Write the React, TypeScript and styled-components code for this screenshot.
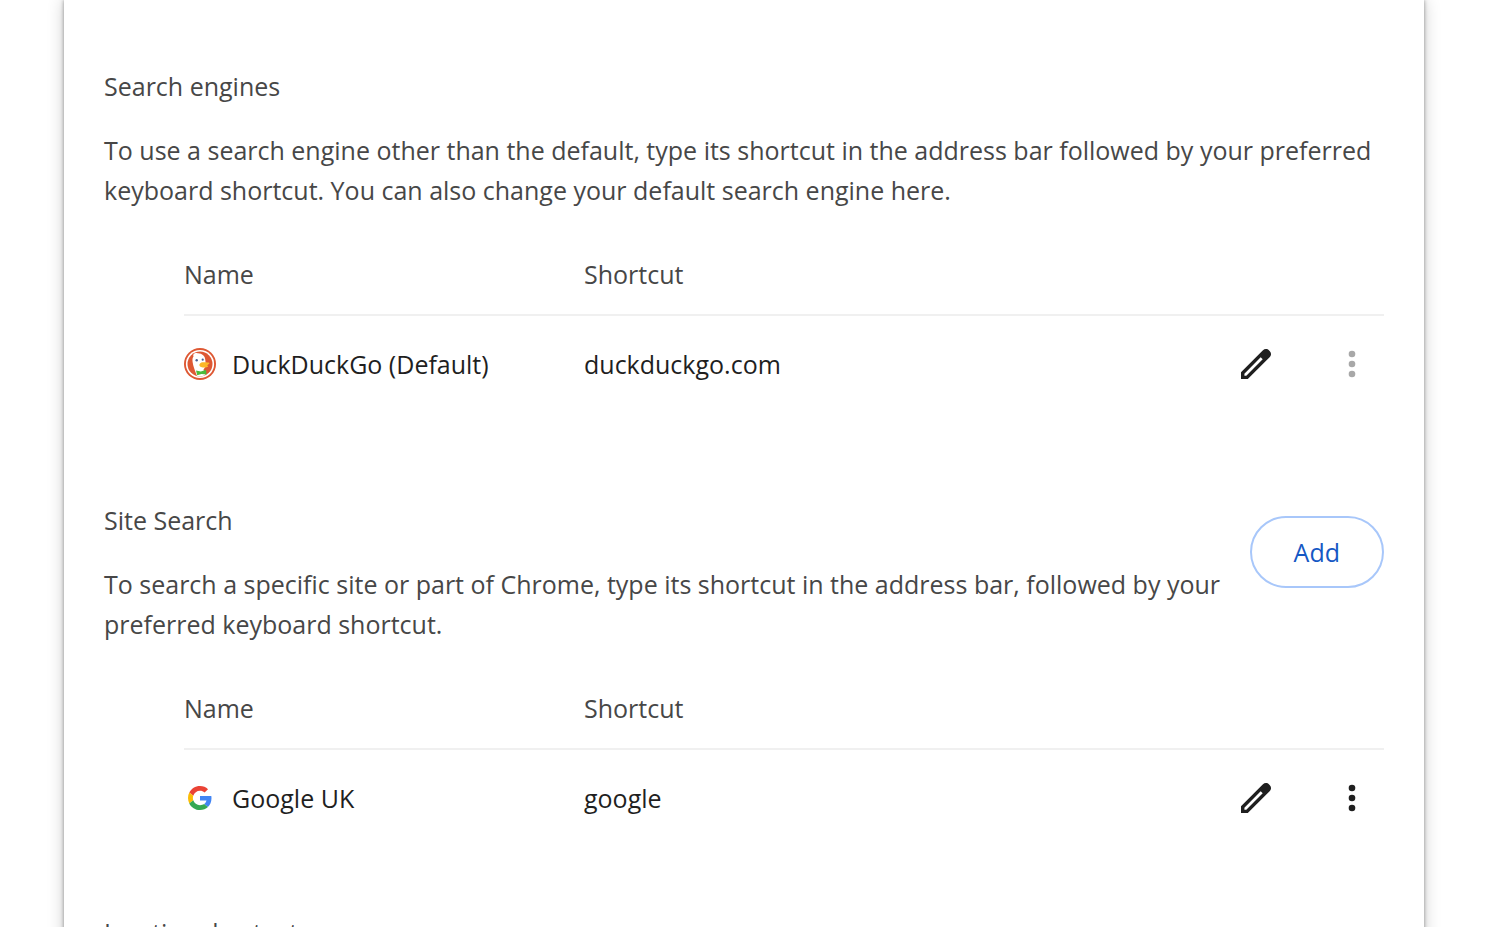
import React from "react";
import styled, { createGlobalStyle } from "styled-components";

const GlobalStyle = createGlobalStyle`
  *, *::before, *::after { box-sizing: border-box; }
  body { margin: 0; background: #fff; }
`;

const Page = styled.main`
  height: 100vh;
  overflow: hidden;
  padding: 0 77px 0 64px;
  font-family: "Segoe UI", "Open Sans", "Noto Sans", sans-serif;
  font-size: 25px;
  line-height: 40px;
  color: #474747;
`;

const Card = styled.div`
  min-height: 100vh;
  padding: 66px 40px 40px;
  background: #fff;
  box-shadow: 0 0 4px rgba(0, 0, 0, 0.4), 0 0 16px rgba(0, 0, 0, 0.2);
`;

const Section = styled.section<{ $gap: number }>`
  padding-bottom: ${(p) => p.$gap}px;
`;

const Intro = styled.div`
  display: flex;
  align-items: flex-start;
  gap: 16px;
`;

const IntroText = styled.div`
  flex: 1;
`;

const Heading = styled.h2`
  margin: 0;
  font: inherit;
`;

const Description = styled.p`
  margin: 24px 0 0;
`;

const AddButton = styled.button`
  margin-top: 16px;
  height: 72px;
  padding: 0 42px;
  border: 2px solid #a8c7fa;
  border-radius: 36px;
  background: #fff;
  color: #1558c4;
  font: inherit;
`;

const EngineTable = styled.table`
  width: calc(100% - 80px);
  margin: 44px 0 0 80px;
  border-collapse: separate;
  border-spacing: 0;
  table-layout: fixed;
`;

const HeadCell = styled.th<{ $width?: number }>`
  width: ${(p) => (p.$width ? `${p.$width}px` : "auto")};
  padding: 0 0 20px;
  border-bottom: 2px solid #f0f0f0;
  text-align: left;
  font-weight: 400;
`;

const Cell = styled.td`
  height: 96px;
  padding: 0;
  color: #1f1f1f;
  vertical-align: middle;
`;

const EngineName = styled.div`
  display: flex;
  align-items: center;
  gap: 16px;
  white-space: nowrap;
`;

const Actions = styled.div`
  display: flex;
  justify-content: flex-end;
  gap: 32px;
`;

const IconButton = styled.button`
  display: grid;
  place-items: center;
  width: 64px;
  height: 64px;
  padding: 0;
  border: 0;
  border-radius: 50%;
  background: transparent;
  color: #1f1f1f;

  &:disabled { color: #a8a8a8; }
`;

const PencilIcon = () => (
  <svg width="30" height="30" viewBox="0 0 30 30" aria-hidden="true">
    <path
      fill="currentColor"
      fillRule="evenodd"
      d="M0 30V23.300L21.700 1.500C23.700 -.4 26.300 -.4 28.100 1.500L28.600 2C30.500 3.800 30.500 6.300 28.600 8.200L6.800 30ZM3.400 26.700H5.300L21.700 10.300L19.700 8.300L3.400 24.700Z"
    />
  </svg>
);

const MoreIcon = () => (
  <svg width="8" height="28" viewBox="0 0 8 28" fill="currentColor" aria-hidden="true">
    <circle cx="4" cy="4" r="3.300" />
    <circle cx="4" cy="14" r="3.300" />
    <circle cx="4" cy="24" r="3.300" />
  </svg>
);

const DuckIcon = () => (
  <svg width="32" height="32" viewBox="0 0 32 32" aria-hidden="true">
    <circle cx="16" cy="16" r="16" fill="#de5833" />
    <circle cx="16" cy="16" r="14.100" fill="#fff" />
    <circle cx="16" cy="16" r="12.500" fill="#de5833" />
    <path fill="#fff" d="M9.500 8.500C8.500 6 11 4.500 13.500 5.200C18 5 21.300 8 21.300 12L22 18L19.500 21.500L21.500 27Q17.500 29.200 13 28C11 23 9.300 18.500 8.600 14C8.300 11.500 8.500 9.800 9.500 8.500Z" />
    <path fill="#fcb827" d="M15.500 16.300C17 13.500 20.500 14.600 24.500 14.500C26.500 14.700 25 16.500 22.800 17.200C25 17.600 24.500 19.200 21.500 19.400C18 19.800 14.800 19 15.500 16.300Z" />
    <path fill="#4cba3c" d="M12 22.500L16.800 23.600L22 21.800L22.500 26.600L17.500 25.900L13.200 27.200Z" />
    <circle cx="12.700" cy="12.300" r="1.200" fill="#4a5f92" />
    <circle cx="18.700" cy="11.700" r="1.100" fill="#4a5f92" />
  </svg>
);

const GoogleIcon = () => (
  <svg width="32" height="32" viewBox="-8 -8 64 64" aria-hidden="true">
    <path fill="#EA4335" d="M24 9.500c3.540 0 6.710 1.220 9.210 3.600l6.850-6.850C35.900 2.380 30.470 0 24 0 14.620 0 6.510 5.380 2.560 13.220l7.980 6.190C12.430 13.720 17.740 9.500 24 9.500z" />
    <path fill="#4285F4" d="M46.980 24.550c0-1.570-.15-3.090-.38-4.550H24v9.020h12.940c-.58 2.960-2.260 5.480-4.780 7.180l7.730 6c4.510-4.180 7.090-10.360 7.090-17.650z" />
    <path fill="#FBBC05" d="M10.530 28.590c-.48-1.450-.76-2.990-.76-4.590s.27-3.140.76-4.590l-7.980-6.190C.92 16.460 0 20.120 0 24c0 3.880.92 7.540 2.560 10.780l7.970-6.190z" />
    <path fill="#34A853" d="M24 48c6.480 0 11.930-2.130 15.890-5.810l-7.730-6c-2.150 1.450-4.920 2.300-8.160 2.300-6.260 0-11.570-4.220-13.470-9.910l-7.980 6.190C6.510 42.620 14.620 48 24 48z" />
  </svg>
);

type EnginesProps = {
  icon: React.ReactNode;
  name: string;
  shortcut: string;
  menuDisabled?: boolean;
};

const Engines = ({ icon, name, shortcut, menuDisabled }: EnginesProps) => (
  <EngineTable>
    <thead>
      <tr>
        <HeadCell scope="col" $width={400}>Name</HeadCell>
        <HeadCell scope="col">Shortcut</HeadCell>
        <HeadCell scope="col" $width={160} aria-label="Actions" />
      </tr>
    </thead>
    <tbody>
      <tr>
        <Cell>
          <EngineName>
            {icon}
            <span>{name}</span>
          </EngineName>
        </Cell>
        <Cell>{shortcut}</Cell>
        <Cell>
          <Actions>
            <IconButton type="button" aria-label={`Edit ${name}`}>
              <PencilIcon />
            </IconButton>
            <IconButton type="button" aria-label={`More actions for ${name}`} disabled={menuDisabled}>
              <MoreIcon />
            </IconButton>
          </Actions>
        </Cell>
      </tr>
    </tbody>
  </EngineTable>
);

export default function App() {
  return (
    <Page>
      <GlobalStyle />
      <Card>
        <Section $gap={88}>
          <Heading>Search engines</Heading>
          <Description>
            To use a search engine other than the default, type its shortcut in the address bar
            followed by your preferred keyboard shortcut. You can also change your default search
            engine here.
          </Description>
          <Engines icon={<DuckIcon />} name="DuckDuckGo (Default)" shortcut="duckduckgo.com" menuDisabled />
        </Section>
        <Section $gap={66}>
          <Intro>
            <IntroText>
              <Heading>Site Search</Heading>
              <Description>
                To search a specific site or part of Chrome, type its shortcut in the address bar,
                followed by your preferred keyboard shortcut.
              </Description>
            </IntroText>
            <AddButton type="button">Add</AddButton>
          </Intro>
          <Engines icon={<GoogleIcon />} name="Google UK" shortcut="google" />
        </Section>
        <Section $gap={0}>
          <Heading>Inactive shortcuts</Heading>
        </Section>
      </Card>
    </Page>
  );
}
